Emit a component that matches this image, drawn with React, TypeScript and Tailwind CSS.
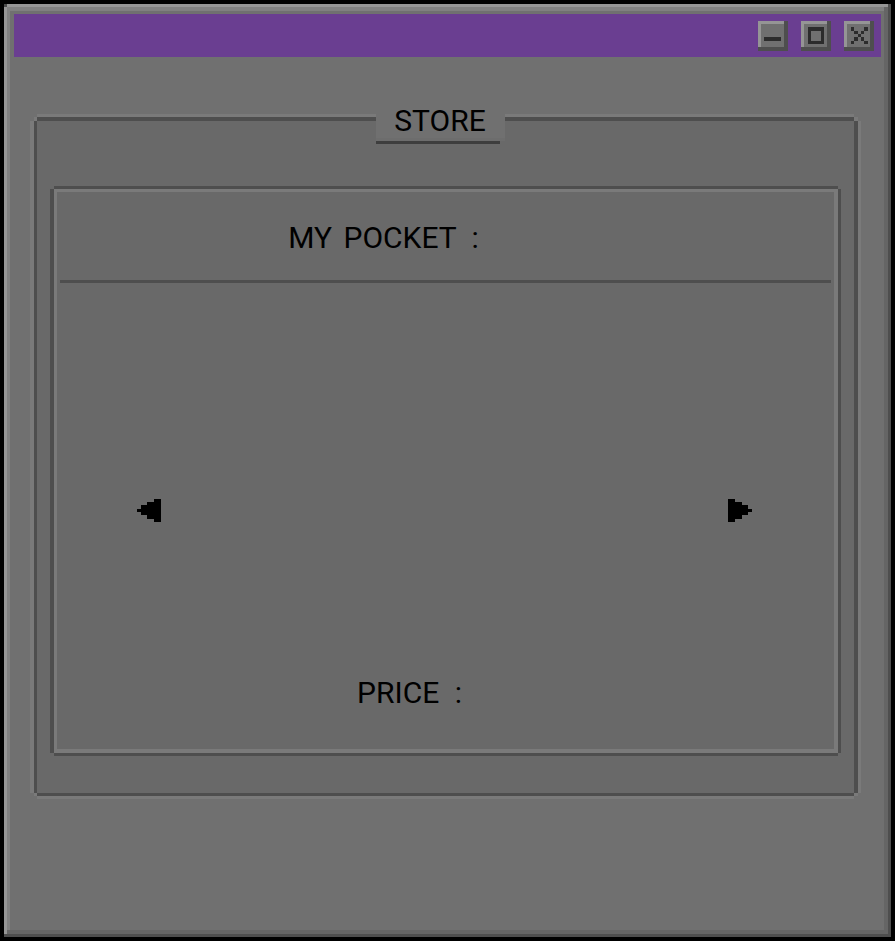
import React from "react";

type ControlProps = { label: string; children: React.ReactNode };

function WindowControl({ label, children }: ControlProps) {
  return (
    <button
      type="button"
      aria-label={label}
      className="flex size-[30px] items-start justify-start bg-[#707070] pt-1.5 pl-1.5 shadow-[inset_-4px_-4px_0_#4e4e4e,inset_3px_3px_0_#959595]"
    >
      <svg width="18" height="17" viewBox="0 0 18 17" shapeRendering="crispEdges" fill="#2c2c2c">
        {children}
      </svg>
    </button>
  );
}

function TitleBar() {
  return (
    <header className="flex h-[43px] items-start justify-end gap-[13px] bg-[#6a3e91] pt-[7px] pr-[7px]">
      <WindowControl label="Minimize">
        <rect x="0" y="10" width="17" height="4" />
      </WindowControl>
      <WindowControl label="Maximize">
        <path fillRule="evenodd" d="M1 0h16v17H1zM4 4v10h10V4z" />
      </WindowControl>
      <WindowControl label="Close">
        <path d="M1 0h3v4H1zM4 4h4v3H4zM8 7h3v3H8zM11 4h3v3h-3zM14 0h4v4h-4zM4 10h4v4H4zM1 14h3v3H1zM11 10h3v4h-3zM14 14h4v3h-4z" />
      </WindowControl>
    </header>
  );
}

export default function App() {
  return (
    <div className="flex min-h-screen bg-black p-1 font-['Roboto','Liberation_Sans',sans-serif] text-[30px] leading-9 text-black">
      <main className="relative flex-1 bg-[#707070] p-2.5 shadow-[inset_-3px_-3px_0_#4e4e4e,inset_3px_3px_0_#959595,inset_-7px_-7px_0_#656565,inset_6px_7px_0_#808080]">
        <span className="absolute top-0 left-0 size-[3px] bg-[#4a4a4a]" />
        <TitleBar />

        <section
          aria-labelledby="store-title"
          className="relative mt-16 mr-[27px] ml-[23px] bg-[#696969] pt-[68px] pr-4 pb-10 pl-[17px] shadow-[-3px_0_0_#4e4e4e,4px_0_0_#4e4e4e,0_-4px_0_#4e4e4e,0_3px_0_#4e4e4e,-3px_-4px_0_#7a7a7a,4px_-4px_0_#7a7a7a,4px_3px_0_#7a7a7a,-3px_3px_0_#7a7a7a,-7px_0_0_#7a7a7a,7px_0_0_#7a7a7a,0_-7px_0_#7a7a7a,0_6px_0_#7a7a7a]"
        >
          <div className="absolute -top-[17px] left-1/2 -ml-[70px] w-[129px]">
            <h1 id="store-title" className="bg-[#707070] text-center leading-[34px]">
              STORE
            </h1>
            <div className="h-[3px] bg-[#6d6d6d]" />
            <div className="mr-[5px] h-[3px] bg-[#3e3e3e]" />
          </div>

          <div className="border-t-3 border-r-4 border-b-4 border-l-3 border-[#7a7a7a] bg-[#696969] shadow-[-4px_0_0_#4e4e4e,3px_0_0_#4e4e4e,0_-3px_0_#4e4e4e,0_3px_0_#4e4e4e]">
            <p className="mx-[3px] border-b-3 border-[#4e4e4e] pt-7 pr-[124px] pb-6 text-center">
              MY <span className="ml-1">POCKET</span> <span className="ml-2">:</span>
            </p>

            <div className="flex justify-between pt-[216px] pr-[82px] pb-[153px] pl-20">
              <button type="button" aria-label="Previous item">
                <svg width="24" height="23" viewBox="0 0 24 23" shapeRendering="crispEdges">
                  <path d="M17 0h7v23h-7v-3h-7v-4H4v-3H0v-3h4V6h6V3h7z" />
                </svg>
              </button>
              <button type="button" aria-label="Next item">
                <svg width="24" height="23" viewBox="0 0 24 23" shapeRendering="crispEdges">
                  <path d="M0 0h7v3h7v3h6v4h4v3h-4v3h-6v4H7v3H0z" />
                </svg>
              </button>
            </div>

            <p className="pr-[72px] pb-[38px] text-center">
              PRICE <span className="ml-2">:</span>
            </p>
          </div>
        </section>
      </main>
    </div>
  );
}
